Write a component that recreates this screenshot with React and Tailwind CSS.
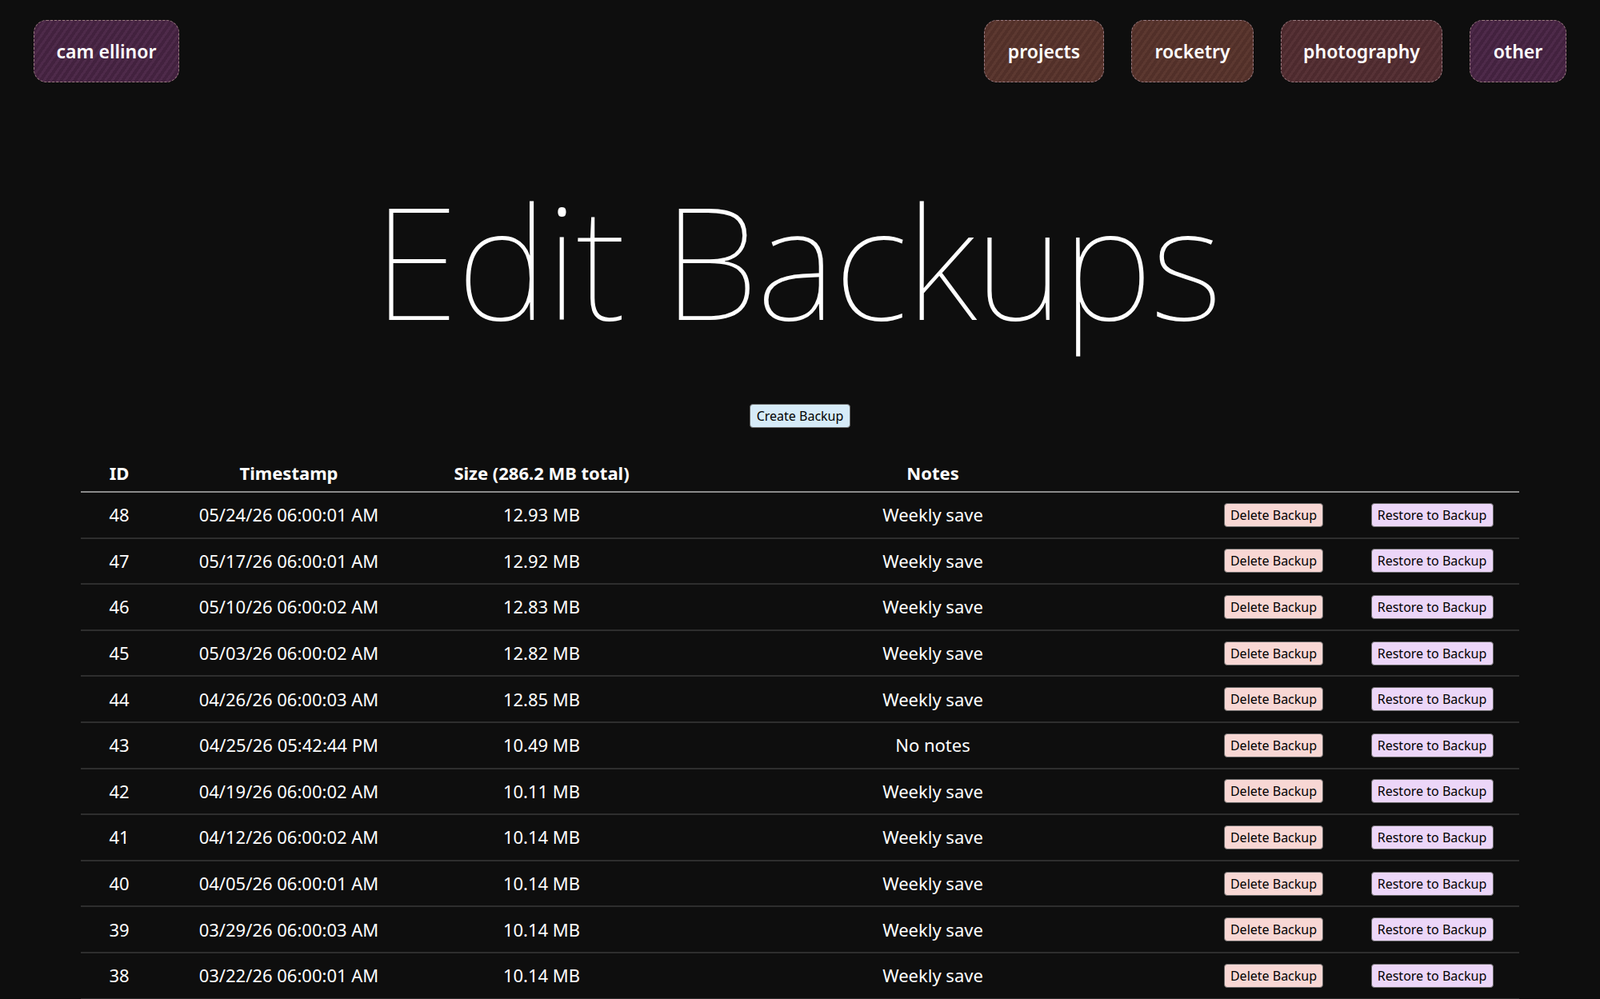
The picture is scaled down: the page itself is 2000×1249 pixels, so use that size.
const rows = [
  [48, "05/24/26 06:00:01 AM", "12.93 MB", "Weekly save"],
  [47, "05/17/26 06:00:01 AM", "12.92 MB", "Weekly save"],
  [46, "05/10/26 06:00:02 AM", "12.83 MB", "Weekly save"],
  [45, "05/03/26 06:00:02 AM", "12.82 MB", "Weekly save"],
  [44, "04/26/26 06:00:03 AM", "12.85 MB", "Weekly save"],
  [43, "04/25/26 05:42:44 PM", "10.49 MB", "No notes"],
  [42, "04/19/26 06:00:02 AM", "10.11 MB", "Weekly save"],
  [41, "04/12/26 06:00:02 AM", "10.14 MB", "Weekly save"],
  [40, "04/05/26 06:00:01 AM", "10.14 MB", "Weekly save"],
  [39, "03/29/26 06:00:03 AM", "10.14 MB", "Weekly save"],
  [38, "03/22/26 06:00:01 AM", "10.14 MB", "Weekly save"],
];

const navBase = "h-[78px] flex items-center justify-center rounded-[16px] border border-dashed border-[#9a7a80] text-white text-[23px] font-semibold";
const stripeBrown = "bg-[repeating-linear-gradient(-55deg,#523029_0px,#523029_4px,#5c3830_4px,#5c3830_7px)]";
const stripeRed = "bg-[repeating-linear-gradient(-55deg,#4d2a2e_0px,#4d2a2e_4px,#573236_4px,#573236_7px)]";
const stripePurple = "bg-[repeating-linear-gradient(-55deg,#43223f_0px,#43223f_4px,#4e2a4a_4px,#4e2a4a_7px)]";
const grid = "grid grid-cols-[96px_328px_304px_674px_178px_218px] items-center";

export default function App() {
  return (
    <div className="h-[1249px] bg-[#0e0e0e] text-white font-['Lato',sans-serif] overflow-hidden">
      <nav className="flex items-start justify-between px-[42px] pt-[25px]">
        <div className={`${navBase} ${stripePurple} w-[182px]`}>cam ellinor</div>
        <div className="flex gap-[34px]">
          <div className={`${navBase} ${stripeBrown} w-[150px]`}>projects</div>
          <div className={`${navBase} ${stripeBrown} w-[153px]`}>rocketry</div>
          <div className={`${navBase} ${stripeRed} w-[202px]`}>photography</div>
          <div className={`${navBase} ${stripePurple} w-[121px]`}>other</div>
        </div>
      </nav>
      <h1 className="text-center font-['Inter',sans-serif] font-thin text-[194px] leading-none tracking-[-2px] mt-[125px]">
        <span className="inline-block -translate-x-[4px]">Edit Backups</span>
      </h1>
      <div className="flex justify-center mt-[83px]">
        <button className="h-[30px] px-[6px] rounded-[4px] border border-[#666] bg-[#d6ebf8] text-black text-[16px] font-['Open_Sans',sans-serif] w-[126px]">Create Backup</button>
      </div>
      <div className="ml-[101px] w-[1798px] mt-[33px] font-['Open_Sans',sans-serif]">
        <div className={`${grid} h-[48px] border-b-2 border-[#8a8a8a] font-bold text-[22px] text-center`}>
          <div>ID</div>
          <div>Timestamp</div>
          <div>Size (286.2 MB total)</div>
          <div>Notes</div>
          <div></div>
          <div></div>
        </div>
        {rows.map((r) => (
          <div key={r[0]} className={`${grid} h-[57.6px] border-b-2 border-[#2e2e2e] text-[22px] text-center`}>
            <div>{r[0]}</div>
            <div>{r[1]}</div>
            <div>{r[2]}</div>
            <div>{r[3]}</div>
            <div className="flex justify-center">
              <button className="h-[30px] w-[124px] rounded-[4px] border border-[#666] bg-[#f8d7d4] text-black text-[16px]">Delete Backup</button>
            </div>
            <div className="flex justify-center">
              <button className="h-[30px] w-[153px] rounded-[4px] border border-[#666] bg-[#ecd6f8] text-black text-[16px]">Restore to Backup</button>
            </div>
          </div>
        ))}
      </div>
    </div>
  );
}
